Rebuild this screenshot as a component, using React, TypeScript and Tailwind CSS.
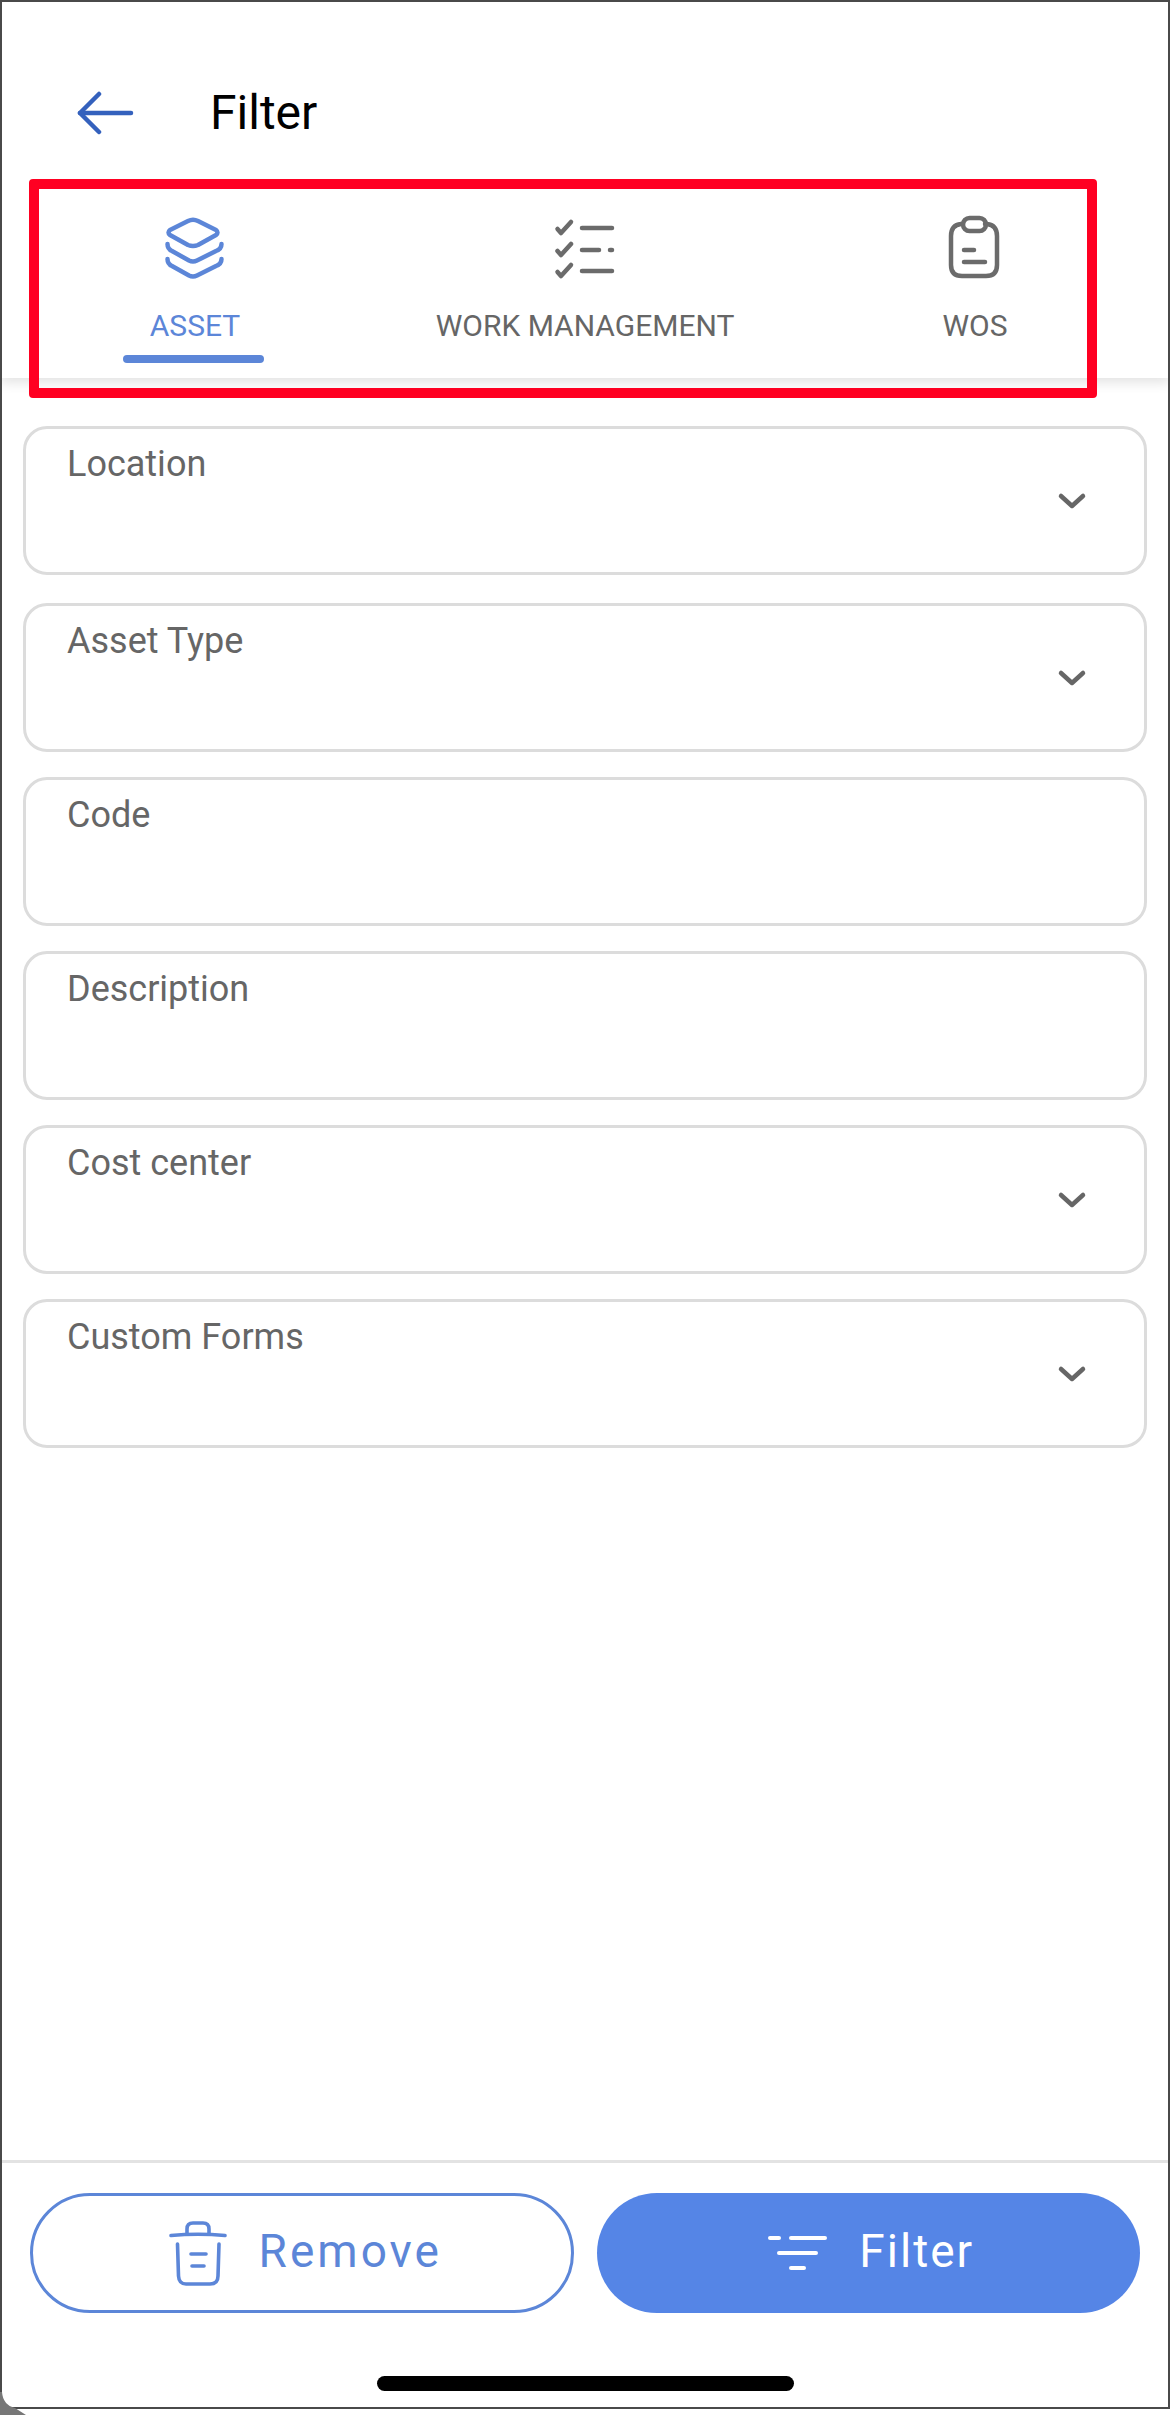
import React from 'react';

const fields = [
  { label: 'Location', select: true },
  { label: 'Asset Type', select: true },
  { label: 'Code', select: false },
  { label: 'Description', select: false },
  { label: 'Cost center', select: true },
  { label: 'Custom Forms', select: true },
];

const LayersIcon = () => (
  <svg viewBox="160 213 70 70" className="w-[70px] h-[70px]" fill="none" stroke="#5c86d8" strokeWidth="4.5" strokeLinecap="round" strokeLinejoin="round">
    <path d="M188 221 L170 230 Q167 232.5 170 235 L188 245 Q193 247 198 245 L216 235 Q219 232.5 216 230 L198 221 Q193 218.5 188 221 Z" />
    <path d="M167.5 244 Q167.5 249 172 251 L189 260.5 Q193 262.5 197 260.5 L216 251 Q221.5 249 221.5 244" />
    <path d="M167.5 259 Q167.5 264 172 266 L189 275.5 Q193 277.5 197 275.5 L216 266 Q221.5 264 221.5 259" />
  </svg>
);

const ChecklistIcon = () => (
  <svg viewBox="550 213 70 70" className="w-[70px] h-[70px]" fill="none" stroke="#6b6b6b" strokeWidth="4.5" strokeLinecap="round" strokeLinejoin="round">
    <path d="M557.5 229 L561 233 L571 222" />
    <path d="M557.5 251 L561 255 L571 244" />
    <path d="M557.5 272 L561 276 L571 265" />
    <path d="M582 228 H612" />
    <path d="M582 250 H599" />
    <path d="M610 250 H612" />
    <path d="M582 271 H612" />
  </svg>
);

const ClipboardIcon = () => (
  <svg viewBox="940 213 70 70" className="w-[70px] h-[70px]" fill="none" stroke="#6b6b6b" strokeWidth="4.5" strokeLinecap="round" strokeLinejoin="round">
    <path d="M963 224 H961 Q951 225 951 236 V265 Q951 276 962 276 H986 Q997 276 997 265 V236 Q997 225 987 224 H985" />
    <rect x="963" y="218" width="23" height="13" rx="6.5" />
    <path d="M964 250 H974" />
    <path d="M964 262 H985" />
  </svg>
);

const TrashIcon = () => (
  <svg viewBox="168 220 60 66" className="w-[60px] h-[66px]" fill="none" stroke="#5c86d8" strokeWidth="3.6" strokeLinecap="round" strokeLinejoin="round">
    <path d="M171 235.5 Q198 233 225 235.5" />
    <path d="M187 234 V229 Q187 223 193 223 H203 Q209 223 209 229 V234" />
    <path d="M177.5 244 L178.5 276 Q179 284 186 284 H210 Q218 284 218 276 L219 244" />
    <path d="M191 254 H206" />
    <path d="M192 266 H204" />
  </svg>
);

const FilterIcon = () => (
  <svg viewBox="766 2236 62 38" className="w-[62px] h-[38px]" fill="none" stroke="#ffffff" strokeWidth="4" strokeLinecap="round">
    <path d="M770 2240 H779" />
    <path d="M791 2240 H825" />
    <path d="M779 2255 H816" />
    <path d="M791 2270 H804" />
  </svg>
);

const tabs = [
  { label: 'ASSET', icon: <LayersIcon />, active: true },
  { label: 'WORK MANAGEMENT', icon: <ChecklistIcon />, active: false },
  { label: 'WOS', icon: <ClipboardIcon />, active: false },
];

export default function App() {
  return (
    <div className="relative w-[1170px] h-[2415px] bg-white flex flex-col overflow-hidden font-['Roboto',sans-serif]">
      {/* Header */}
      <div className="relative z-10 bg-white h-[180px] pt-[91px] pl-[76px] flex items-start gap-[74px]">
        <svg viewBox="76 91 60 44" className="w-[60px] h-[44px]" fill="none" stroke="#3461bd" strokeWidth="4.5" strokeLinecap="round" strokeLinejoin="round">
          <path d="M80 113 H131" />
          <path d="M99 94 L80 113 L99 132" />
        </svg>
        <span className="text-[48px] leading-[44px] text-black">Filter</span>
      </div>

      {/* Tabs */}
      <div className="relative h-[198px] grid grid-cols-3 bg-white shadow-[0_4px_12px_rgba(0,0,0,0.12)]">
        {tabs.map((tab) => (
          <div key={tab.label} className="flex flex-col items-center pt-[33px]">
            {tab.icon}
            <span className={`mt-[26px] text-[30px] leading-[34px] ${tab.active ? 'text-[#5c86d8]' : 'text-[#666666]'}`}>
              {tab.label}
            </span>
            {tab.active && <div className="mt-[12px] mr-[3px] w-[141px] h-[8px] rounded-full bg-[#5c86d8]" />}
          </div>
        ))}
      </div>

      {/* Fields */}
      <div className="flex-1 px-[23px] pt-[48px] flex flex-col gap-[25px]">
        {fields.map((field, i) => (
          <div
            key={field.label}
            className={`h-[149px] flex justify-between border-[3px] border-[#dcdcdc] rounded-[24px] pl-[41px] pr-[57px] pt-[15px] ${i === 1 ? 'mt-[3px]' : ''}`}
          >
            <span className="text-[36px] leading-[41px] text-[#666666]">{field.label}</span>
            {field.select && (
              <svg viewBox="0 0 30 20" className="w-[30px] h-[20px] self-center mb-[12px]" fill="none" stroke="#666666" strokeWidth="4.5" strokeLinecap="round" strokeLinejoin="round">
                <path d="M4 4 L15 14 L26 4" />
              </svg>
            )}
          </div>
        ))}
      </div>

      {/* Footer */}
      <div className="h-[255px] border-t-[3px] border-[#e3e3e3] flex flex-col">
        <div className="mt-[30px] px-[30px] grid grid-cols-2 gap-[23px]">
          <button className="h-[120px] pl-[6px] rounded-full border-[3px] border-[#5c86d8] flex items-center justify-center gap-[31px] text-[#5c86d8] text-[46px] tracking-[3px]">
            <TrashIcon />
            <span className="pb-[4px]">Remove</span>
          </button>
          <button className="h-[120px] pl-[4px] rounded-full bg-[#5585e6] flex items-center justify-center gap-[31px] text-white text-[46px] tracking-[2px]">
            <FilterIcon />
            <span className="pb-[4px]">Filter</span>
          </button>
        </div>
        <div className="mt-[63px] mx-auto w-[417px] h-[15px] rounded-full bg-black" />
      </div>

      {/* Device frame edge */}
      <div className="absolute z-20 left-0 top-0 w-[1170px] h-[2409px] border-2 border-[#4a4a4a] pointer-events-none" />
      <svg viewBox="0 2390 30 25" className="absolute z-20 left-0 bottom-0 w-[30px] h-[25px] pointer-events-none" fill="#777777">
        <path d="M0 2392 H2 Q3 2405 15 2408 L26 2415 H0 Z" />
      </svg>

      {/* Red annotation box */}
      <div className="absolute z-20 left-[29px] top-[179px] w-[1068px] h-[219px] border-[10px] border-[#ff0022] rounded-[4px] pointer-events-none" />
    </div>
  );
}
